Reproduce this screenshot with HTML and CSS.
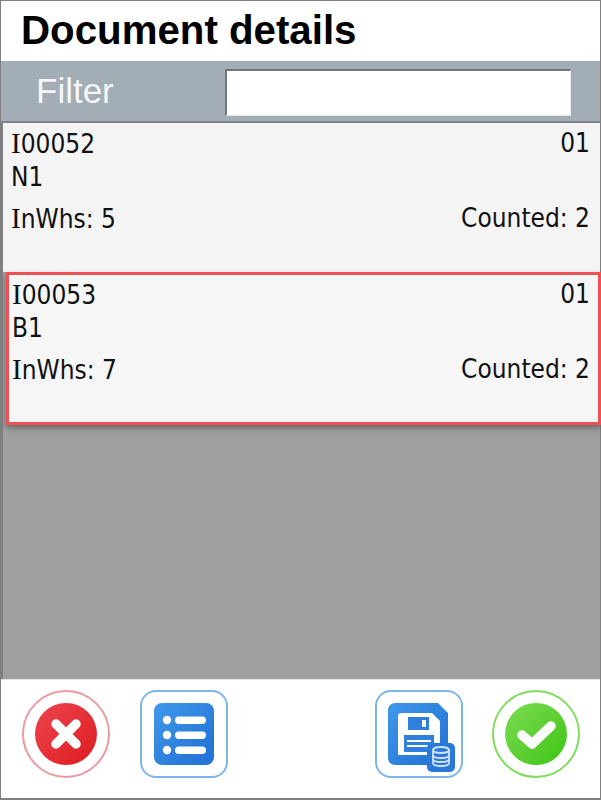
FILE: index.html
```html
<!DOCTYPE html>
<html lang="en">
<head>
  <meta charset="UTF-8">
  <meta name="viewport" content="width=device-width, initial-scale=1">
  <title>Document details</title>
  <link rel="stylesheet" href="styles.css">
</head>
<body>

  <div class="app">
    <h1 class="title">Document details</h1>

    <div class="filter-bar">
      <label class="filter-label" for="filter">Filter</label>
      <input class="filter-input" id="filter" type="text">
    </div>

    <div class="list">
      <div class="card">
        <div class="row"><span><span class="cap-i">I</span>00052</span><span>01</span></div>
        <div class="row"><span>N1</span></div>
        <div class="row row-counts"><span><span class="cap-i">I</span>nWhs: 5</span><span>Counted: 2</span></div>
      </div>
      <div class="card card-selected">
        <div class="row"><span><span class="cap-i">I</span>00053</span><span>01</span></div>
        <div class="row"><span>B1</span></div>
        <div class="row row-counts"><span><span class="cap-i">I</span>nWhs: 7</span><span>Counted: 2</span></div>
      </div>
    </div>

    <div class="toolbar">
      <button class="tool tool-cancel" type="button" aria-label="Cancel">
        <svg viewBox="0 0 62 62" width="62" height="62">
          <defs>
            <linearGradient id="red" x1="0" y1="0" x2="1" y2="1">
              <stop offset="0" stop-color="#ee4550"/>
              <stop offset="1" stop-color="#dd1c1f"/>
            </linearGradient>
          </defs>
          <circle cx="31" cy="31" r="31" fill="url(#red)"/>
          <path d="M21 21 L41 41 M41 21 L21 41" stroke="#fff" stroke-width="9.5" stroke-linecap="round"/>
        </svg>
      </button>
      <button class="tool tool-square" type="button" aria-label="List">
        <svg viewBox="0 0 60 62" width="60" height="62">
          <defs>
            <linearGradient id="blue" x1="0" y1="0" x2="1" y2="1">
              <stop offset="0" stop-color="#4098ea"/>
              <stop offset="1" stop-color="#1f70d3"/>
            </linearGradient>
          </defs>
          <rect width="60" height="62" rx="8" fill="url(#blue)"/>
          <g fill="#fff">
            <circle cx="13" cy="17" r="4.2"/>
            <circle cx="13" cy="32" r="4.2"/>
            <circle cx="13" cy="47" r="4.2"/>
            <rect x="21" y="13.5" width="31" height="7.5" rx="3.7"/>
            <rect x="21" y="28.5" width="31" height="7.5" rx="3.7"/>
            <rect x="21" y="43.5" width="31" height="7.5" rx="3.7"/>
          </g>
        </svg>
      </button>
      <div class="spacer"></div>
      <button class="tool tool-square" type="button" aria-label="Save">
        <svg viewBox="0 0 84 84" width="84" height="84">
          <defs>
            <linearGradient id="blue2" x1="0" y1="0" x2="1" y2="1">
              <stop offset="0" stop-color="#4098ea"/>
              <stop offset="1" stop-color="#1f70d3"/>
            </linearGradient>
          </defs>
          <g transform="translate(11 11)">
            <path d="M8 0 H50 L60 10 V54 Q60 62 52 62 H8 Q0 62 0 54 V8 Q0 0 8 0 Z" fill="url(#blue2)"/>
            <path d="M13 10 H44 L52 18 V52 H10 V13 Q10 10 13 10 Z" fill="#fff"/>
            <rect x="20" y="14" width="21" height="13" fill="#2f80de"/>
            <rect x="34" y="17" width="4" height="7" fill="#fff"/>
            <rect x="16" y="32" width="30" height="17" fill="#2f80de"/>
            <rect x="19" y="37" width="24" height="2" fill="#fff"/>
            <rect x="19" y="42" width="24" height="2" fill="#fff"/>
            <rect x="39" y="40" width="28" height="29" rx="5" fill="#2a79d8"/>
            <g fill="none" stroke="#cfe3f8" stroke-width="1.8">
              <ellipse cx="53" cy="47" rx="8" ry="3"/>
              <path d="M45 47 V60 C45 64 61 64 61 60 V47"/>
              <path d="M45 52 C45 56 61 56 61 52"/>
              <path d="M45 56 C45 60 61 60 61 56"/>
            </g>
          </g>
        </svg>
      </button>
      <button class="tool tool-ok" type="button" aria-label="Confirm">
        <svg viewBox="0 0 62 62" width="62" height="62">
          <defs>
            <linearGradient id="green" x1="0" y1="0" x2="1" y2="1">
              <stop offset="0" stop-color="#7fdc55"/>
              <stop offset="1" stop-color="#3cc412"/>
            </linearGradient>
          </defs>
          <circle cx="31" cy="31" r="31" fill="url(#green)"/>
          <path d="M17 32 L27 41 L46 23" fill="none" stroke="#fff" stroke-width="9.5" stroke-linecap="round" stroke-linejoin="round"/>
        </svg>
      </button>
    </div>
  </div>

</body>
</html>
```

FILE: styles.css
```css
* {
  box-sizing: border-box;
}

body {
  margin: 0;
  font-family: "DejaVu Sans", sans-serif;
  background: white;
}

.app {
  display: flex;
  flex-direction: column;
  height: 800px;
  border: 1px solid #7f7f7f;
  border-width: 1px 1px 2px 1px;
}

.title {
  margin: 0;
  height: 60px;
  padding: 0 0 0 20px;
  display: flex;
  align-items: center;
  font-family: "Liberation Sans", sans-serif;
  font-size: 40.25px;
  font-weight: bold;
  color: #000;
  background: white;
}

.filter-bar {
  display: flex;
  align-items: center;
  height: 62px;
  background: #a2adb5;
  border-bottom: 2px solid #7e8387;
}

.filter-label {
  width: 224px;
  padding-left: 35px;
  font-family: "Liberation Sans", sans-serif;
  font-size: 35px;
  color: #f4f6f7;
}

.filter-input {
  width: 346px;
  height: 47px;
  margin-top: 2px;
  border: 1px solid #e8eaec;
  border-top: 2px solid #70767b;
  border-left: 2px solid #70767b;
  background: white;
}

.list {
  flex: 1;
  background: #9f9f9f;
  border-left: 2px solid #808080;
}

.card {
  height: 149px;
  padding: 4px 10px 0 8px;
  background: #f4f4f4;
  color: #111;
  font-family: "DejaVu Sans Condensed", "DejaVu Sans", sans-serif;
  font-stretch: condensed;
  font-size: 26px;
  line-height: 33px;
}

.card-selected {
  height: 153px;
  margin: 0 -1px 0 3px;
  padding: 3px 8px 0 3px;
  background: #f6f6f7;
  border: 3px solid #ee5053;
  box-shadow: 0 3px 6px rgba(0, 0, 0, 0.35);
}

.cap-i {
  font-family: "Liberation Serif", serif;
  font-size: 1.12em;
}

.row {
  display: flex;
  justify-content: space-between;
}

.row-counts {
  margin-top: 8px;
}

.toolbar {
  display: flex;
  align-items: flex-start;
  height: 119px;
  padding: 10px 20px 0 21px;
  background: white;
  border-top: 1px solid #e2e2e2;
}

.tool {
  display: flex;
  align-items: center;
  justify-content: center;
  width: 88px;
  height: 88px;
  padding: 0;
  background: white;
  border: 2px solid #7db6ec;
  border-radius: 16px;
}

.tool-cancel {
  border-color: #ea9aa0;
  border-radius: 50%;
  margin-right: 30px;
}

.tool-ok {
  border-color: #7fdc5c;
  border-radius: 50%;
  margin-left: 29px;
}

.spacer {
  flex: 1;
}
```
